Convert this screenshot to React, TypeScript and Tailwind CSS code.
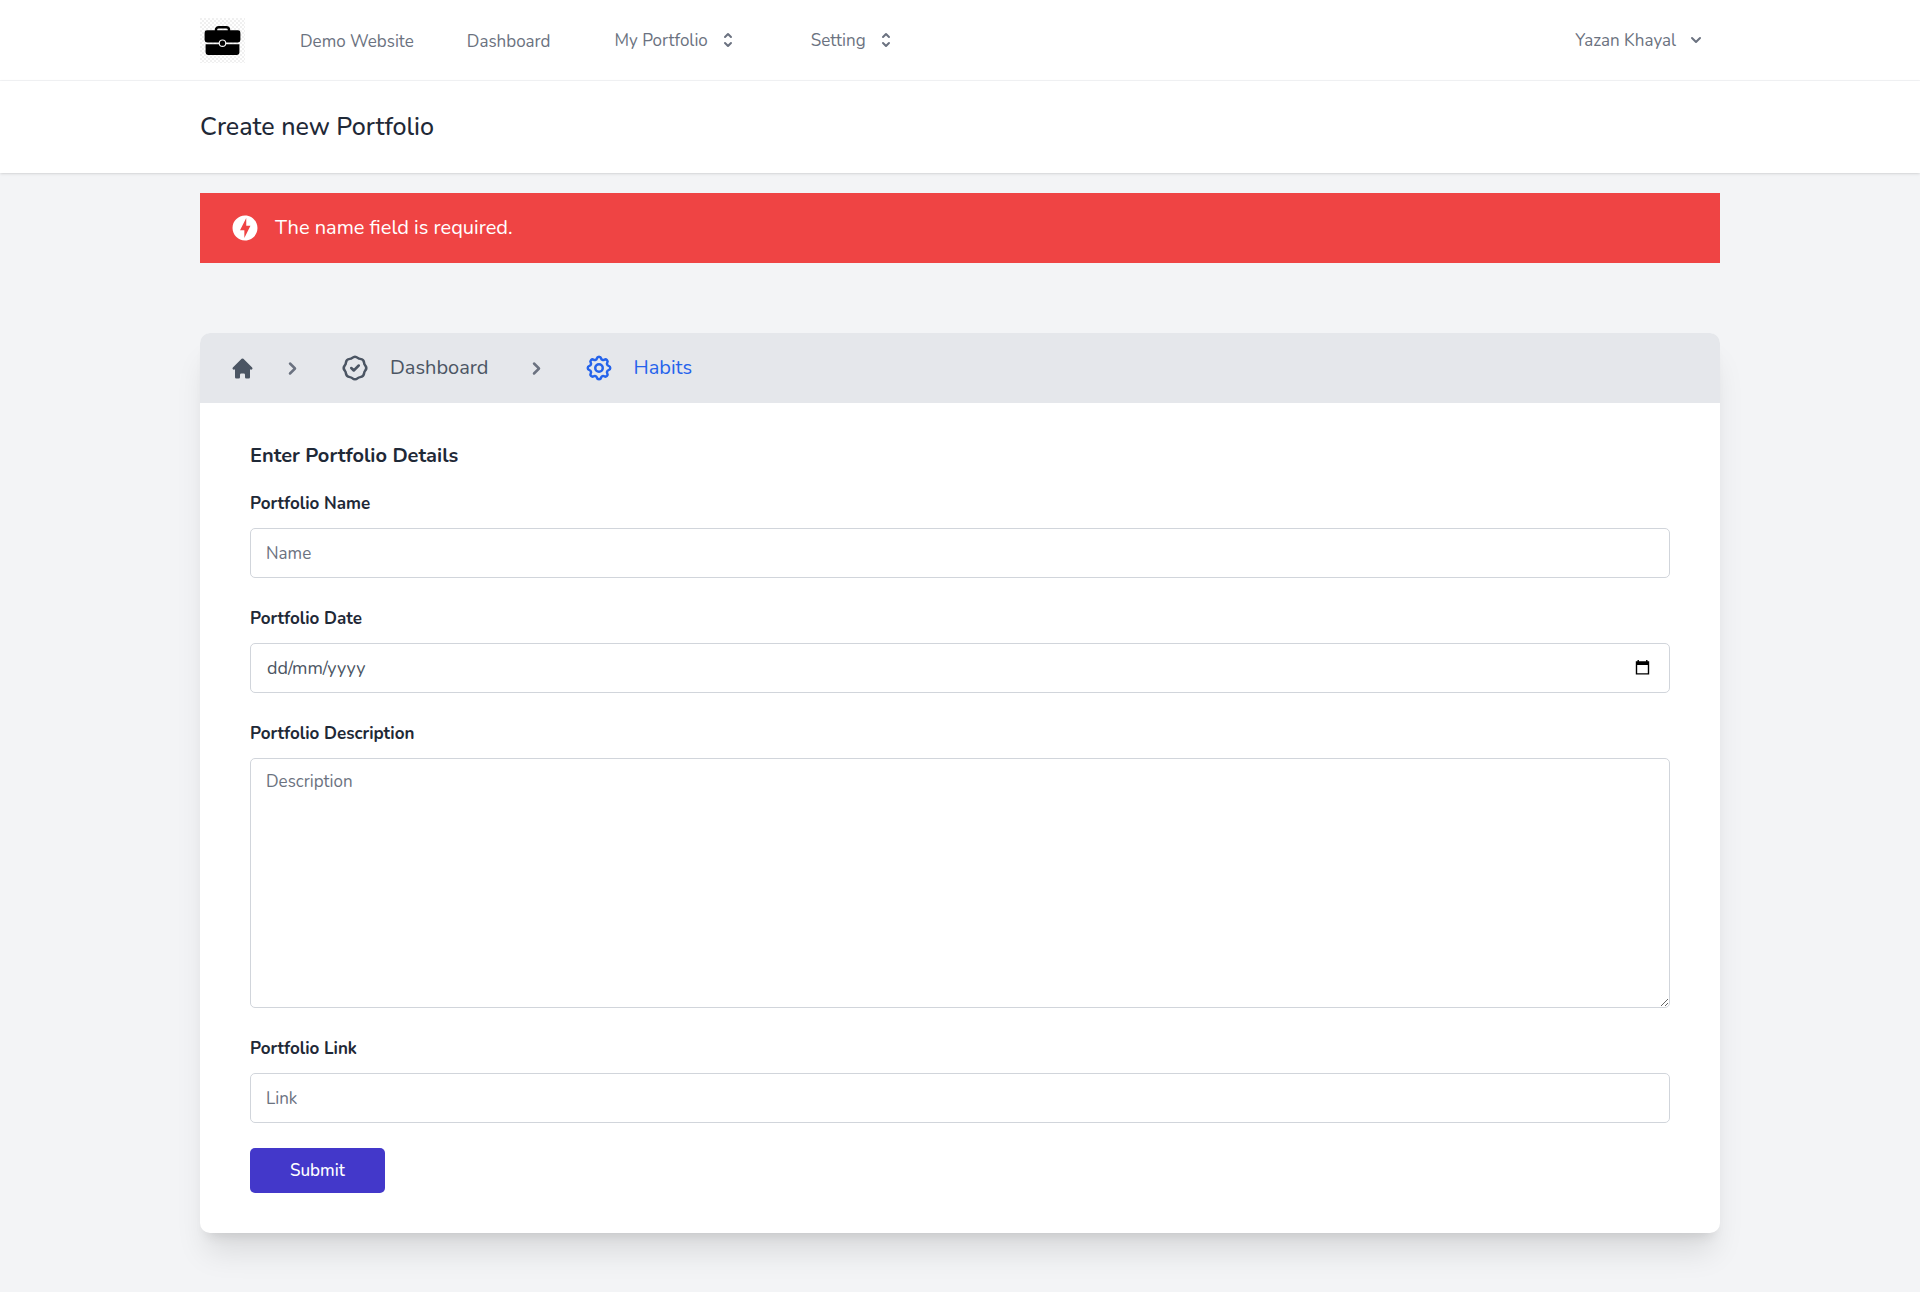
import { useState } from 'react'
import type { ReactNode } from 'react'
import { HiChevronDown, HiChevronRight, HiHome, HiOutlineBadgeCheck, HiOutlineCog, HiSelector } from 'react-icons/hi'
import { MdOfflineBolt } from 'react-icons/md'

function BriefcaseLogo() {
    return (
        <svg viewBox="0 0 45 45" className="h-[45px] w-[45px]" aria-hidden="true">
            <defs>
                <pattern id="checks" width="4" height="4" patternUnits="userSpaceOnUse">
                    <rect width="4" height="4" fill="#ffffff" />
                    <rect width="2" height="2" fill="#f0f0f0" />
                    <rect x="2" y="2" width="2" height="2" fill="#f0f0f0" />
                </pattern>
            </defs>
            <rect width="45" height="45" fill="url(#checks)" />
            <path d="M16 13v-1.2c0-1.6 1.2-2.6 2.8-2.6h7.4c1.6 0 2.8 1 2.8 2.6V13" fill="none" stroke="#000" strokeWidth="2.4" />
            <path d="M7 12.3h31a2.4 2.4 0 0 1 2.4 2.4v7.4a2.4 2.4 0 0 1-2.4 2.4H7a2.4 2.4 0 0 1-2.4-2.4v-7.4A2.4 2.4 0 0 1 7 12.3z" />
            <path d="M5.6 26.3h33.8v8.2a2.4 2.4 0 0 1-2.4 2.4H8a2.4 2.4 0 0 1-2.4-2.4z" />
            <circle cx="22.5" cy="25.2" r="3.2" stroke="#f4f4f4" strokeWidth="1.1" />
        </svg>
    )
}

function NavMenu({ children }: { children: ReactNode }) {
    return (
        <button type="button" className="flex items-center gap-[10px] text-[#6b7280] hover:text-gray-700">
            <span className="pt-0.5">{children}</span>
            <HiSelector className="h-5 w-5" />
        </button>
    )
}

interface FieldProps {
    id: string
    label: string
    children: ReactNode
}

function Field({ id, label, children }: FieldProps) {
    return (
        <div>
            <label htmlFor={id} className="mb-[11px] block text-[17px] leading-[27px] font-bold text-[#1f2937]">
                {label}
            </label>
            {children}
        </div>
    )
}

const inputClass =
    'block h-[50px] w-full rounded-[5px] border border-[#d1d5db] bg-white px-[15px] text-[17px] text-gray-700 placeholder:text-[#6b7280]'

export default function App() {
    const [form, setForm] = useState({ name: '', date: '', description: '', link: '' })

    const update = (key: string, value: string) => setForm({ ...form, [key]: value })

    return (
        <div className="min-h-screen bg-[#f3f4f6] font-['Nunito','Lato',sans-serif] text-gray-900">
            {/* Navigation */}
            <nav className="border-b border-gray-100 bg-white">
                <div className="mx-auto flex h-20 max-w-[1600px] items-center justify-between px-10 text-[17px]">
                    <div className="flex items-center">
                        <a href="#" aria-label="Home">
                            <BriefcaseLogo />
                        </a>
                        <a href="#" className="ml-[55px] pt-1 text-[#6b7280] hover:text-gray-700">Demo Website</a>
                        <a href="#" className="ml-[53px] pt-1 text-[#6b7280] hover:text-gray-700">Dashboard</a>
                        <div className="ml-16 flex gap-[73px]">
                            <NavMenu>My Portfolio</NavMenu>
                            <NavMenu>Setting</NavMenu>
                        </div>
                    </div>
                    <button type="button" className="mr-[14px] flex items-center gap-[10px] text-[#6b7280] hover:text-gray-700">
                        <span className="pt-0.5">Yazan Khayal</span>
                        <HiChevronDown className="h-5 w-5" />
                    </button>
                </div>
            </nav>

            {/* Page Heading */}
            <header className="relative bg-white shadow">
                <div className="mx-auto max-w-[1600px] px-10 py-[30px]">
                    <h2 className="text-[25px] leading-8 font-medium text-[#1f2937]">Create new Portfolio</h2>
                </div>
            </header>

            <main className="mx-auto max-w-[1600px] px-10 pt-5 pb-[59px]">
                <div role="alert" className="flex h-[70px] items-center bg-[#ef4444] px-[30px] text-xl text-white">
                    <MdOfflineBolt className="mr-[15px] h-[30px] w-[30px]" />
                    <p>The name field is required.</p>
                </div>

                <div className="mt-[70px] overflow-hidden rounded-[10px] bg-white shadow-[0_25px_31px_-6px_rgba(0,0,0,0.1),0_10px_12px_-7px_rgba(0,0,0,0.1)]">
                    {/* Breadcrumb */}
                    <nav aria-label="Breadcrumb" className="flex h-[70px] items-center bg-[#e5e7eb] px-[30px] text-xl text-[#4b5563]">
                        <a href="#" aria-label="Home">
                            <HiHome className="h-[25px] w-[25px]" />
                        </a>
                        <HiChevronRight className="mr-[35px] ml-[25px] h-[25px] w-[25px] text-[#6b7280]" />
                        <a href="#" className="flex items-center gap-5">
                            <HiOutlineBadgeCheck className="h-[30px] w-[30px]" />
                            Dashboard
                        </a>
                        <HiChevronRight className="mx-[35px] h-[25px] w-[25px] text-[#6b7280]" />
                        <a href="#" className="flex items-center gap-5 text-[#2563eb]">
                            <HiOutlineCog className="h-[30px] w-[30px]" />
                            Habits
                        </a>
                    </nav>

                    <form className="px-[50px] pt-[37px] pb-10" onSubmit={(e) => e.preventDefault()}>
                        <h3 className="mb-[18px] text-xl leading-8 font-bold text-[#1f2937]">Enter Portfolio Details</h3>
                        <div className="flex flex-col gap-[27px]">
                            <Field id="name" label="Portfolio Name">
                                <input
                                    id="name"
                                    type="text"
                                    placeholder="Name"
                                    className={inputClass}
                                    value={form.name}
                                    onChange={(e) => update('name', e.target.value)}
                                />
                            </Field>
                            <Field id="date" label="Portfolio Date">
                                <div className="flex h-[50px] items-center rounded-[5px] border border-[#d1d5db] bg-white px-4">
                                    <input
                                        id="date"
                                        type="text"
                                        placeholder="dd/mm/yyyy"
                                        className="min-w-0 flex-1 text-lg text-gray-700 placeholder:text-[#4b5563]"
                                        value={form.date}
                                        onChange={(e) => update('date', e.target.value)}
                                    />
                                    <button type="button" aria-label="Show date picker" className="mr-[3px]">
                                        <svg viewBox="0 0 15 16" className="h-4 w-[15px]" aria-hidden="true">
                                            <path fillRule="evenodd" d="M2.5 0h1.4v1.3h7.2V0h1.4v1.3H14.2V14.6H.8V1.3h1.7zM2.2 5v8.2h10.6V5z" />
                                        </svg>
                                    </button>
                                </div>
                            </Field>
                            <Field id="description" label="Portfolio Description">
                                <textarea
                                    id="description"
                                    placeholder="Description"
                                    className="block h-[250px] w-full rounded-[5px] border border-[#d1d5db] bg-white px-[15px] py-[10px] text-[17px] leading-[25px] text-gray-700 placeholder:text-[#6b7280]"
                                    value={form.description}
                                    onChange={(e) => update('description', e.target.value)}
                                />
                            </Field>
                            <Field id="link" label="Portfolio Link">
                                <input
                                    id="link"
                                    type="text"
                                    placeholder="Link"
                                    className={inputClass}
                                    value={form.link}
                                    onChange={(e) => update('link', e.target.value)}
                                />
                            </Field>
                        </div>
                        <button type="submit" className="mt-[25px] block h-[45px] rounded-[5px] bg-[#4338ca] px-10 text-[17px] font-medium text-white hover:bg-indigo-600">
                            Submit
                        </button>
                    </form>
                </div>
            </main>
        </div>
    )
}
